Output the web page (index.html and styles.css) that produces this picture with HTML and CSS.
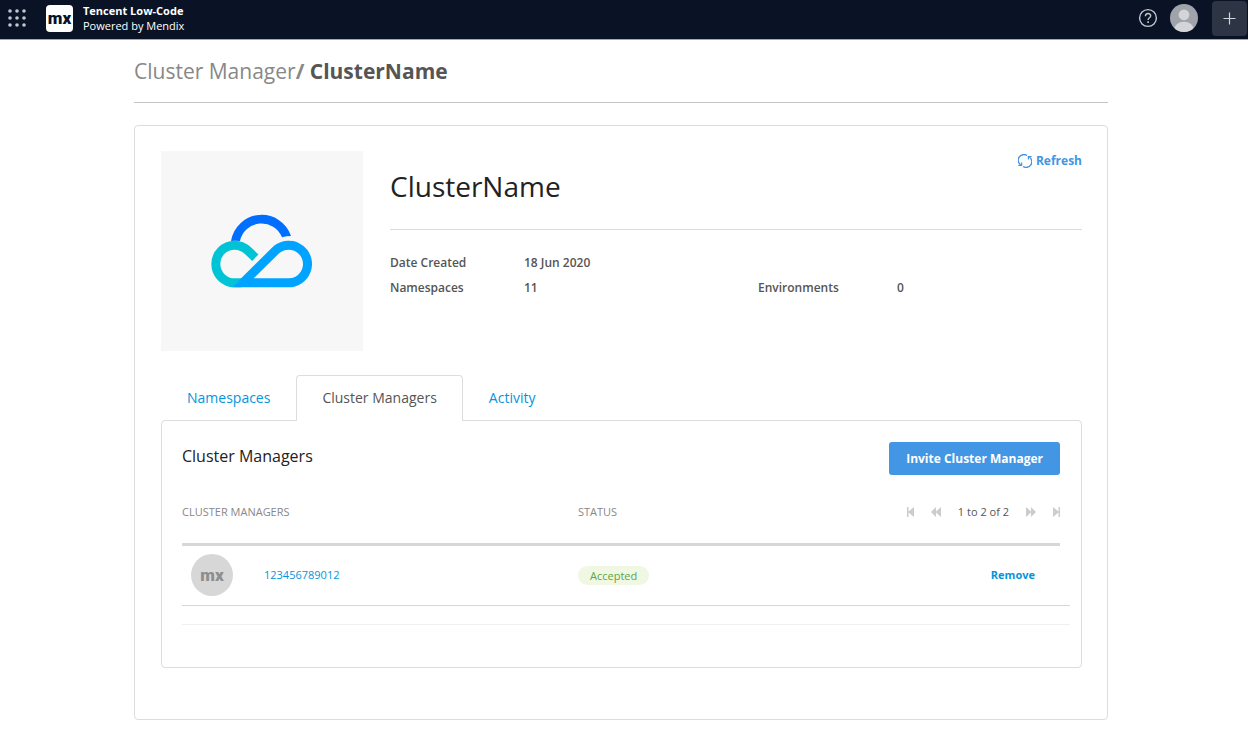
FILE: index.html
```html
<!DOCTYPE html>
<html lang="en">
<head>
<meta charset="utf-8">
<title>Cluster Manager</title>
<link rel="stylesheet" href="styles.css">
</head>
<body>
<header class="topbar">
  <button class="icon-btn apps" aria-label="Apps">
    <svg width="18" height="18" viewBox="0 0 18 18" fill="#c3c6cc"><circle cx="2" cy="2" r="1.8"/><circle cx="9" cy="2" r="1.8"/><circle cx="16" cy="2" r="1.8"/><circle cx="2" cy="9" r="1.8"/><circle cx="9" cy="9" r="1.8"/><circle cx="16" cy="9" r="1.8"/><circle cx="2" cy="16" r="1.8"/><circle cx="9" cy="16" r="1.8"/><circle cx="16" cy="16" r="1.8"/></svg>
  </button>
  <span class="brand-logo mx">mx</span>
  <div class="brand-text"><strong>Tencent Low-Code</strong><span>Powered by Mendix</span></div>
  <div class="top-actions">
    <button class="icon-btn" aria-label="Help">
      <svg width="20" height="20" viewBox="0 0 20 20" fill="none" stroke="#c3c6cc" stroke-width="1.4"><circle cx="10" cy="10" r="8.4"/><path d="M7.4 8.2C7.4 4.6 12.7 4.8 12.7 7.8C12.7 9.8 10.1 9.7 10.1 12"/><path d="M10.1 13.3V15" stroke-width="1.6"/></svg>
    </button>
    <button class="icon-btn profile" aria-label="Profile">
      <svg width="28" height="28" viewBox="0 0 28 28"><defs><clipPath id="face"><circle cx="14" cy="14" r="14"/></clipPath></defs><g clip-path="url(#face)"><rect width="28" height="28" fill="#a0a4aa"/><circle cx="14" cy="10.8" r="5.4" fill="#d3d5d8"/><ellipse cx="14" cy="25.5" rx="9.8" ry="7.7" fill="#d3d5d8"/></g></svg>
    </button>
    <button class="add" aria-label="Add">
      <svg width="13" height="13" viewBox="0 0 13 13" stroke="#d0d3d8" stroke-width="1.2"><path d="M6.5 .5V12.5M.5 6.5H12.5"/></svg>
    </button>
  </div>
</header>
<main class="page">
  <h1 class="crumbs"><a href="#">Cluster Manager</a><b class="slash">/</b> <b>ClusterName</b></h1>
  <section class="card">
    <div class="summary">
      <div class="cloud">
        <svg width="102" height="74" viewBox="35 26 306 222">
          <path d="M95 107A93 93 0 0 1 275 92Q261 92 248 96A66 66 0 0 0 122 107Q108 105 95 107Z" fill="#006eff"/>
          <path d="M125 232.500H106A56.500 56.500 0 0 1 106 119.500C123 119.500 136 126 147 137L168 157" fill="none" stroke="#00c4d6" stroke-width="27"/>
          <path d="M98 246L218.500 126.500A70 70 0 1 1 268 246ZM163 219H268A43 43 0 1 0 237.600 145.600Z" fill="#00a3ff" fill-rule="evenodd"/>
        </svg>
      </div>
      <div class="info">
        <div class="info-head">
          <h2>ClusterName</h2>
          <button class="refresh">
            <svg width="14" height="14" viewBox="0 0 14 14" fill="none" stroke="currentColor" stroke-width="1.4"><path d="M9 1.500A5.700 5.700 0 0 0 2.700 11M5 12.500A5.700 5.700 0 0 0 11.300 3"/><path d="M.3 11.500H3.600V8.600M13.700 2.500H10.400V5.400" stroke-width="1.2"/></svg>
            Refresh
          </button>
        </div>
        <dl class="facts">
          <dt>Date Created</dt><dd class="wide">18 Jun 2020</dd>
          <dt>Namespaces</dt><dd>11</dd><dt>Environments</dt><dd>0</dd>
        </dl>
      </div>
    </div>
    <nav class="tabs">
      <a href="#">Namespaces</a>
      <a href="#" class="active" aria-current="page">Cluster Managers</a>
      <a href="#">Activity</a>
    </nav>
    <div class="panel">
      <div class="panel-head">
        <h3>Cluster Managers</h3>
        <button class="invite">Invite Cluster Manager</button>
      </div>
      <table class="managers">
        <colgroup><col class="col-name"><col class="col-status"><col><col class="col-edge"></colgroup>
        <thead>
          <tr>
            <th>CLUSTER MANAGERS</th>
            <th>STATUS</th>
            <td>
              <div class="pager">
                <button aria-label="First page"><svg width="7" height="10" viewBox="0 0 7 10"><path d="M0 0H1.500V4.500L7 0V10L1.500 5.500V10H0Z"/></svg></button>
                <button aria-label="Previous page"><svg width="10" height="10" viewBox="0 0 10 10"><path d="M0 5L5 0V4.500L10 0V10L5 5.500V10Z"/></svg></button>
                <span>1 to 2 of 2</span>
                <button aria-label="Next page"><svg width="10" height="10" viewBox="0 0 10 10"><path d="M10 5L5 0V4.500L0 0V10L5 5.500V10Z"/></svg></button>
                <button aria-label="Last page"><svg width="7" height="10" viewBox="0 0 7 10"><path d="M7 0H5.500V4.500L0 0V10L5.500 5.500V10H7Z"/></svg></button>
              </div>
            </td>
            <td class="edge"></td>
          </tr>
        </thead>
        <tbody>
          <tr>
            <td><div class="person"><span class="avatar mx">mx</span><a href="#">123456789012</a></div></td>
            <td><span class="badge">Accepted</span></td>
            <td colspan="2" class="action"><button class="remove">Remove</button></td>
          </tr>
        </tbody>
      </table>
      <hr class="end-rule">
    </div>
  </section>
</main>
</body>
</html>
```
FILE: styles.css
```css
* { box-sizing: border-box; }
body {
  margin: 0;
  background: #fff;
  color: #555;
  font: 12px/18px "Open Sans", "Noto Sans", sans-serif;
}
button {
  margin: 0;
  padding: 0;
  border: 0;
  background: none;
  font: inherit;
  color: inherit;
  cursor: pointer;
}
a { color: #0595db; text-decoration: none; }
svg { display: block; }
h1, h2, h3, dl, dd { margin: 0; }

.topbar {
  display: flex;
  align-items: center;
  height: 40px;
  padding: 0 1px 3px 8px;
  background: #0a1325;
  border-bottom: 1px solid #a5a8af;
}
.mx {
  display: flex;
  align-items: center;
  justify-content: center;
  font-family: Roboto, sans-serif;
  font-weight: 900;
}
.brand-logo {
  width: 27px;
  height: 27px;
  margin: 0 10px 0 20px;
  border-radius: 4px;
  background: #fff;
  color: #0a1325;
  font-size: 17px;
}
.brand-text {
  display: flex;
  flex-direction: column;
  color: #fff;
  font-size: 11px;
  line-height: 15px;
}
.top-actions {
  display: flex;
  align-items: center;
  margin-left: auto;
}
.profile { margin: 0 14px 0 12px; }
.add {
  display: flex;
  align-items: center;
  justify-content: center;
  width: 35px;
  height: 35px;
  border-radius: 4px;
  background: #2d3444;
}

.page { padding: 0 140px 14px 134px; }
.crumbs {
  padding: 16px 0;
  border-bottom: 1px solid #c4c4c4;
  font-size: 21px;
  line-height: 30px;
  font-weight: 400;
}
.crumbs a, .slash { color: #888; }

.card {
  margin-top: 22px;
  padding: 25px 25px 51px 26px;
  border: 1px solid #ddd;
  border-radius: 4px;
}
.summary { display: flex; gap: 27px; }
.cloud {
  display: flex;
  align-items: center;
  justify-content: center;
  flex: 0 0 202px;
  height: 200px;
  background: #f7f7f7;
}
.info { flex: 1; }
.info-head {
  display: flex;
  justify-content: space-between;
  align-items: flex-start;
  height: 79px;
  border-bottom: 1px solid #ddd;
}
.info-head h2 {
  padding-top: 15px;
  color: #222;
  font-size: 28px;
  line-height: 40px;
  font-weight: 400;
}
.refresh {
  display: flex;
  align-items: center;
  gap: 4px;
  color: #4296e4;
  font-weight: 700;
  line-height: 20px;
}
.facts {
  display: grid;
  grid-template-columns: 134px 1fr 139px 185px;
  row-gap: 7px;
  padding-top: 24px;
  font-weight: 600;
}
.wide { grid-column: span 3; }

.tabs {
  display: flex;
  margin-top: 24px;
  font-size: 14px;
  line-height: 20px;
}
.tabs a {
  padding: 12px 26px;
  border-top: 1px solid transparent;
}
.tabs .active {
  position: relative;
  margin-bottom: -1px;
  padding: 12px 25px 13px;
  border: 1px solid #ddd;
  border-bottom: 0;
  border-radius: 4px 4px 0 0;
  background: #fff;
  color: #555;
}
.panel {
  padding: 21px 11px 42px 20px;
  border: 1px solid #ddd;
  border-radius: 4px;
}
.panel-head {
  display: flex;
  justify-content: space-between;
  align-items: flex-start;
  padding-right: 10px;
}
.panel-head h3 {
  padding-top: 2px;
  color: #222;
  font-size: 16px;
  line-height: 24px;
  font-weight: 400;
}
.invite {
  height: 33px;
  padding: 0 17px;
  border-radius: 3px;
  background: #4296e4;
  color: #fff;
  font-weight: 700;
}

.managers {
  width: 100%;
  table-layout: fixed;
  border-spacing: 0;
}
.col-name { width: 396px; }
.col-status { width: 220px; }
.col-edge { width: 10px; }
.managers thead th, .managers thead td {
  padding: 28px 0 22px;
  border-bottom: 3px solid #d7d7d7;
  font-size: 11px;
  font-weight: 400;
  text-align: left;
}
.managers thead th { color: #888; }
.managers thead .edge { border-bottom-color: transparent; }
.managers tbody td {
  padding: 8px 0 9px;
  border-bottom: 1px solid #d7d7d7;
  font-size: 11px;
}
.pager {
  display: flex;
  align-items: center;
  justify-content: flex-end;
  gap: 17px;
}
.pager svg { fill: #ccc; }
.person { display: flex; align-items: center; }
.avatar {
  width: 42px;
  height: 42px;
  margin: 0 31px 0 9px;
  border-radius: 50%;
  background: #d7d7d7;
  color: #8e8e8e;
  font-size: 17px;
}
.badge {
  display: inline-block;
  padding: 0 12px;
  border-radius: 10px;
  background: #f0f8e4;
  color: #5aa545;
  line-height: 19px;
}
.managers .action { padding-right: 35px; text-align: right; }
.remove { color: #0595db; font-weight: 700; }
.end-rule {
  margin: 18px 0 0;
  border: 0;
  border-top: 1px solid #f0f0f0;
}
```
